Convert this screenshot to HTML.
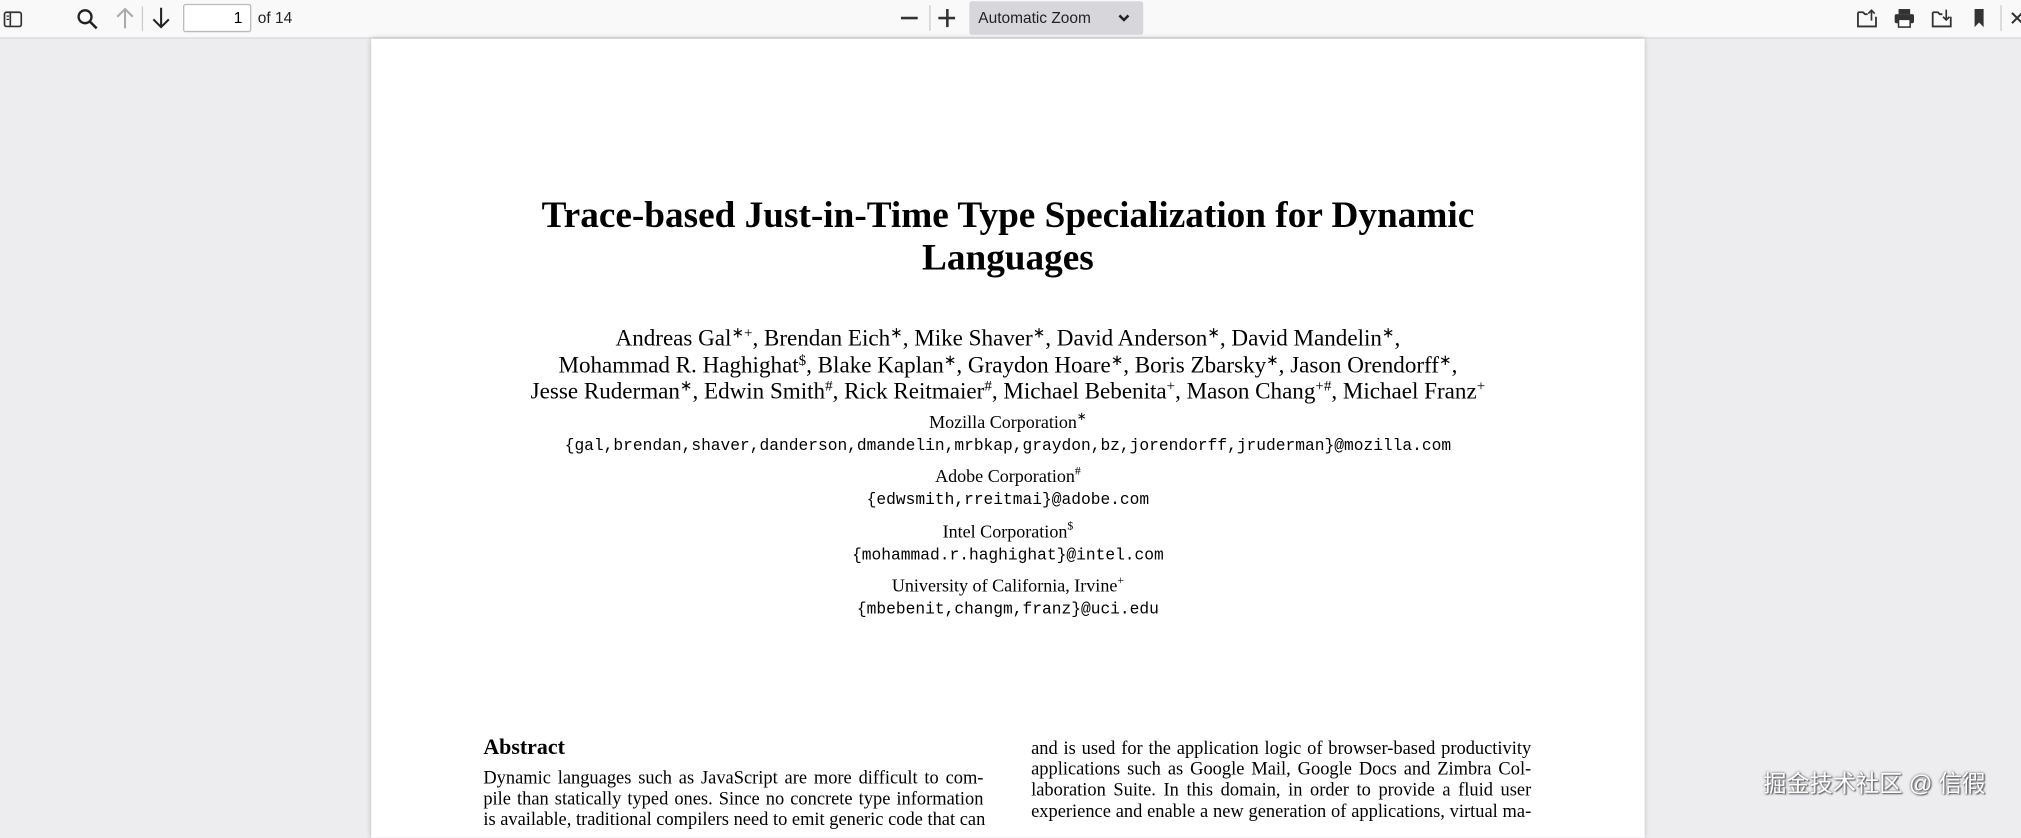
<!DOCTYPE html>
<html><head><meta charset="utf-8"><style>
html,body{margin:0;padding:0;width:2021px;height:817px;overflow:hidden;background:#ededf0;}
#w{position:absolute;left:0;top:0;width:1568px;height:634px;transform:scale(1.28890);transform-origin:0 0;font-family:"Liberation Serif",serif;}
.tb{position:absolute;left:0;top:0;width:1568px;height:29px;background:#f9f9fa;border-bottom:1px solid #d8d8dc;font-family:"Liberation Sans",sans-serif;}
.ab{position:absolute;}
.page{position:absolute;left:288px;top:30px;width:988px;height:620px;background:#fff;box-shadow:0 0 4px rgba(0,0,0,.25);}
.c{position:absolute;left:0;width:988px;text-align:center;white-space:nowrap;color:#000;}
.m{font-family:"Liberation Mono",monospace;}
sup{font-size:65%;vertical-align:6px;line-height:0}
.col{position:absolute;width:388px;font-size:14.3px;line-height:16.2px;}
.col div{white-space:nowrap;text-align:justify;text-align-last:justify;height:16.2px;}
</style></head><body><div id="w">
<div class="tb">
<svg class="ab" style="left:2px;top:7px" width="16" height="16" viewBox="0 0 16 16"><rect x="1.5" y="2.5" width="13" height="11" rx="1.5" fill="none" stroke="#333" stroke-width="1.3"/><line x1="6" y1="3" x2="6" y2="13" stroke="#333" stroke-width="1.3"/><line x1="3" y1="5.5" x2="5" y2="5.5" stroke="#333"/><line x1="3" y1="8" x2="5" y2="8" stroke="#333"/></svg>
<svg class="ab" style="left:59px;top:6px" width="18" height="18" viewBox="0 0 18 18"><circle cx="7" cy="7" r="5" fill="none" stroke="#222" stroke-width="1.8"/><line x1="10.5" y1="10.5" x2="16" y2="16" stroke="#222" stroke-width="2"/></svg>
<svg class="ab" style="left:89px;top:5px" width="16" height="18" viewBox="0 0 16 18"><path d="M8 17V2M2 8l6-6 6 6" fill="none" stroke="#aaa" stroke-width="1.6"/></svg>
<div class="ab" style="left:110px;top:5px;width:1px;height:19px;background:#ccc"></div>
<svg class="ab" style="left:117px;top:5px" width="16" height="18" viewBox="0 0 16 18"><path d="M8 1v15M2 10l6 6 6-6" fill="none" stroke="#222" stroke-width="1.6"/></svg>
<div class="ab" style="left:142px;top:3px;border:1px solid #bbb;background:#fff;border-radius:2px;font-size:12px;text-align:right;line-height:21px;box-sizing:border-box;padding-right:6px;width:53px;height:22px">1</div>
<div class="ab" style="left:200px;top:7px;font-size:12px;color:#222">of 14</div>
<div class="ab" style="left:699px;top:13px;width:13px;height:2px;background:#333"></div>
<div class="ab" style="left:721px;top:4px;width:1px;height:20px;background:#ccc"></div>
<div class="ab" style="left:728px;top:13px;width:13px;height:2px;background:#333"></div>
<div class="ab" style="left:734px;top:7px;width:2px;height:14px;background:#333"></div>
<div class="ab" style="left:752px;top:1px;width:135px;height:26px;background:#d7d7db;border-radius:2px"></div>
<div class="ab" style="left:759px;top:7px;font-size:12px;color:#222">Automatic Zoom</div>
<svg class="ab" style="left:867px;top:10px" width="10" height="8" viewBox="0 0 10 8"><path d="M1.5 2l3.5 3.5L8.5 2" fill="none" stroke="#222" stroke-width="2"/></svg>
<svg class="ab" style="left:1440px;top:6px" width="17" height="16" viewBox="0 0 17 16"><path d="M1.5 3.5h4l1.5 1.5h2M15.5 7v7.5h-14v-11" fill="none" stroke="#333" stroke-width="1.4"/><path d="M12 10V2M9.5 4.5L12 2l2.5 2.5" fill="none" stroke="#333" stroke-width="1.3"/></svg>
<svg class="ab" style="left:1469px;top:6px" width="17" height="16" viewBox="0 0 17 16"><rect x="4" y="1" width="9" height="4" fill="#333"/><rect x="1" y="5" width="15" height="7" rx="1.5" fill="#333"/><rect x="4" y="9" width="9" height="6" fill="#fff" stroke="#333" stroke-width="1.2"/></svg>
<svg class="ab" style="left:1498px;top:6px" width="17" height="16" viewBox="0 0 17 16"><path d="M1.5 3.5h4l1.5 1.5h2M15.5 7v7.5h-14v-11" fill="none" stroke="#333" stroke-width="1.4"/><path d="M12 1.5v8M9.5 7L12 9.5 14.5 7" fill="none" stroke="#333" stroke-width="1.3"/></svg>
<svg class="ab" style="left:1530px;top:6px" width="12" height="16" viewBox="0 0 12 16"><path d="M2 1h7v14l-3.5-3.5L2 15z" fill="#333"/></svg>
<div class="ab" style="left:1552px;top:4px;width:1px;height:20px;background:#ccc"></div>
<svg class="ab" style="left:1560px;top:8px" width="10" height="12" viewBox="0 0 10 12"><path d="M1 2l8 8M9 2l-8 8" stroke="#333" stroke-width="1.6"/></svg>
</div>
<div class="page">
<div class="c" style="top:121px;font-size:28.9px;font-weight:bold;line-height:33px">Trace-based Just-in-Time Type Specialization for Dynamic<br>Languages</div>
<div class="c" style="top:222px;font-size:17.9px;line-height:20.5px">Andreas Gal<sup>∗+</sup>, Brendan Eich<sup>∗</sup>, Mike Shaver<sup>∗</sup>, David Anderson<sup>∗</sup>, David Mandelin<sup>∗</sup>,<br>Mohammad R. Haghighat<sup>$</sup>, Blake Kaplan<sup>∗</sup>, Graydon Hoare<sup>∗</sup>, Boris Zbarsky<sup>∗</sup>, Jason Orendorff<sup>∗</sup>,<br>Jesse Ruderman<sup>∗</sup>, Edwin Smith<sup>#</sup>, Rick Reitmaier<sup>#</sup>, Michael Bebenita<sup>+</sup>, Mason Chang<sup>+#</sup>, Michael Franz<sup>+</sup></div>
<div class="c" style="top:290px;font-size:14px;line-height:17px">Mozilla Corporation<sup>∗</sup><br><span class="m" style="font-size:12.6px">{gal,brendan,shaver,danderson,dmandelin,mrbkap,graydon,bz,jorendorff,jruderman}@mozilla.com</span></div>
<div class="c" style="top:332px;font-size:14px;line-height:17px">Adobe Corporation<sup>#</sup><br><span class="m" style="font-size:12.6px">{edwsmith,rreitmai}@adobe.com</span></div>
<div class="c" style="top:375px;font-size:14px;line-height:17px">Intel Corporation<sup>$</sup><br><span class="m" style="font-size:12.6px">{mohammad.r.haghighat}@intel.com</span></div>
<div class="c" style="top:417px;font-size:14px;line-height:17px">University of California, Irvine<sup>+</sup><br><span class="m" style="font-size:12.6px">{mbebenit,changm,franz}@uci.edu</span></div>
<div class="ab" style="left:87px;top:540px;font-size:17px;font-weight:bold">Abstract</div>
<div class="col" style="left:87px;top:566px"><div>Dynamic languages such as JavaScript are more difficult to com-</div><div>pile than statically typed ones. Since no concrete type information</div><div>is available, traditional compilers need to emit generic code that can</div></div>
<div class="col" style="left:512px;top:543px"><div>and is used for the application logic of browser-based productivity</div><div>applications such as Google Mail, Google Docs and Zimbra Col-</div><div>laboration Suite. In this domain, in order to provide a fluid user</div><div>experience and enable a new generation of applications, virtual ma-</div></div>
</div>
<div class="ab" style="left:1368px;top:594px;font-size:18px;color:#fff;font-family:'Liberation Sans','Noto Sans CJK SC',sans-serif;text-shadow:0 0 2px #555,1px 1px 1px #666">掘金技术社区 @ 信徦</div>
</div></body></html>
